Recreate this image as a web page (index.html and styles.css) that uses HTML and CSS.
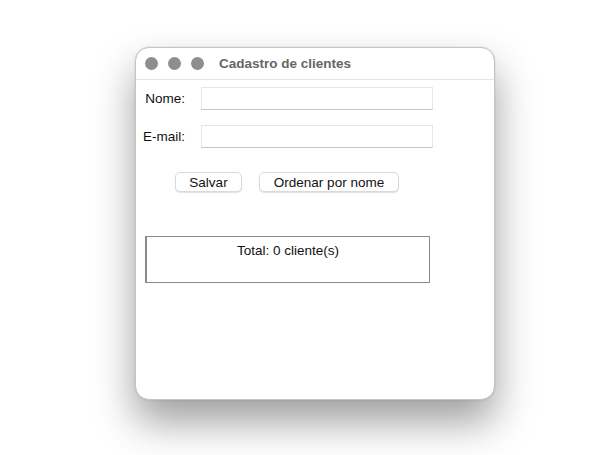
FILE: index.html
```html
<!DOCTYPE html>
<html lang="pt">
<head>
    <meta charset="UTF-8">
    <title>Cadastro de clientes</title>
    <link rel="stylesheet" href="styles.css">
</head>
<body>
    <div class="window">
        <div class="titlebar">
            <div class="lights">
                <span class="light"></span>
                <span class="light"></span>
                <span class="light"></span>
            </div>
            <div class="title">Cadastro de clientes</div>
        </div>

        <div class="content">
            <div class="form">
                <label for="nome">Nome:</label>
                <input type="text" id="nome">
                <label for="email">E-mail:</label>
                <input type="text" id="email">
            </div>

            <div class="buttons">
                <button class="btn-save">Salvar</button>
                <button class="btn-sort">Ordenar por nome</button>
            </div>

            <div class="list-box">
                <div class="total">Total: 0 cliente(s)</div>
            </div>
        </div>
    </div>
</body>
</html>
```

FILE: styles.css
```css
html, body {
    height: 100%;
}

body {
    margin: 0;
    padding: 47px 0 0 135px;
    box-sizing: border-box;
    min-height: 455px;
    background-color: #fff;
    font-family: 'Liberation Sans', 'Helvetica', sans-serif;
    font-size: 13.5px;
    color: #111;
}

.window {
    width: 360px;
    height: 353px;
    box-sizing: border-box;
    background-color: #fff;
    border: 1px solid #c4c4c4;
    border-radius: 14px;
    box-shadow: 0 22px 40px rgba(0, 0, 0, 0.38), 0 0 2px rgba(0, 0, 0, 0.15);
    overflow: hidden;
}

.titlebar {
    height: 31px;
    border-bottom: 1px solid #e4e4e4;
    display: flex;
    align-items: center;
}

.lights {
    display: flex;
    gap: 10px;
    margin-left: 9px;
}

.light {
    width: 13px;
    height: 13px;
    border-radius: 50%;
    background-color: #8e8e8e;
}

.title {
    margin-left: 15px;
    font-weight: bold;
    color: #666;
}

.content {
    padding-top: 7px;
}

.form {
    display: grid;
    grid-template-columns: 49px 232px;
    column-gap: 16px;
    row-gap: 15px;
    align-items: center;
}

.form label {
    text-align: right;
}

.form input {
    height: 23px;
    box-sizing: border-box;
    margin: 0;
    border: 1px solid #e6e6e6;
    border-bottom-color: #c4c4c4;
    background-color: #fff;
    outline: none;
}

.buttons {
    display: flex;
    gap: 17px;
    margin: 24px 0 0 39px;
}

button {
    height: 20px;
    padding: 0;
    border: 1px solid #dadada;
    border-radius: 5px;
    background-color: #fff;
    box-shadow: 0 1px 1px rgba(0, 0, 0, 0.12);
    font-family: inherit;
    font-size: 13.5px;
    color: #111;
}

.btn-save {
    width: 67px;
}

.btn-sort {
    width: 140px;
}

.list-box {
    width: 285px;
    height: 47px;
    box-sizing: border-box;
    margin: 44px 0 0 9px;
    border: 1px solid #8a8a8a;
    border-left-width: 2px;
}

.total {
    text-align: center;
    padding-top: 6px;
}
```
